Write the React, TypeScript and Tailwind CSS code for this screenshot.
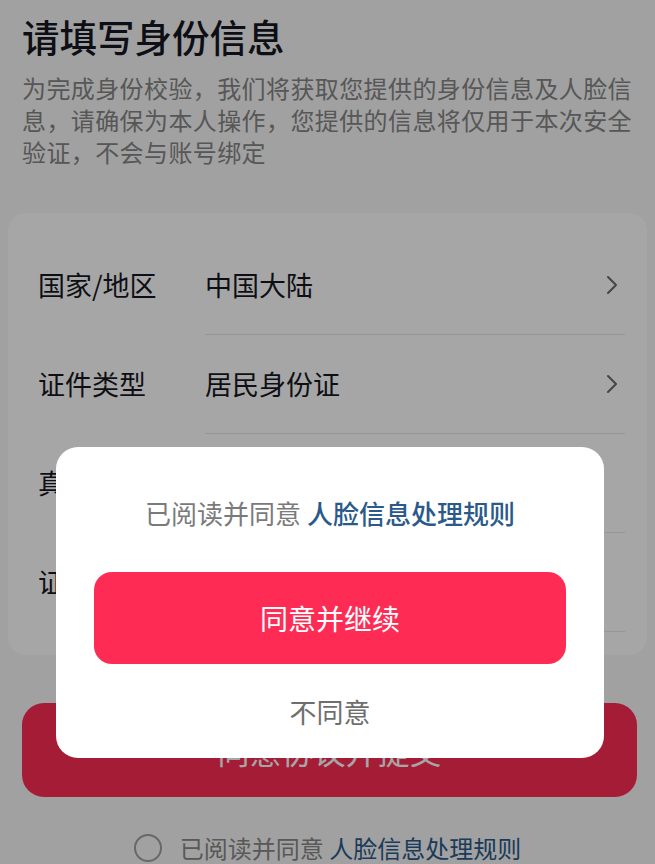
import React from "react";

const font = { fontFamily: '"Noto Sans CJK SC", "Noto Sans", sans-serif' };

function Chevron() {
  return (
    <svg width="14" height="22" viewBox="0 0 14 22" fill="none">
      <path d="M3 3 L11 11 L3 19" stroke="#6b6b6b" strokeWidth="2" strokeLinecap="round" strokeLinejoin="round" />
    </svg>
  );
}

function Row({ label, value, placeholder, chevron }: { label: string; value?: string; placeholder?: string; chevron?: boolean }) {
  return (
    <div className="flex h-[99px]">
      <div className="w-[197px] pl-[30px] flex items-center text-[27px] text-[#161823]">{label}</div>
      <div className="flex-1 mr-[22px] border-b border-[#e6e6e6] flex items-center justify-between pr-[6px]">
        {value ? (
          <span className="text-[27px] text-[#161823]">{value}</span>
        ) : (
          <span className="text-[27px] text-[#bbbbbb]">{placeholder}</span>
        )}
        {chevron ? <Chevron /> : null}
      </div>
    </div>
  );
}

export default function App() {
  return (
    <div className="relative w-full h-[864px] bg-[#f8f8f8] overflow-hidden" style={font}>
      <div className="pl-[22px] pr-[14px] pt-[12px]">
        <h1 className="text-[37.5px] leading-[48px] font-medium text-[#161823]">请填写身份信息</h1>
        <p className="mt-[12px] text-[24px] leading-[32px] tracking-[0.4px] text-[#868686]">
          为完成身份校验，我们将获取您提供的身份信息及人脸信息，请确保为本人操作，您提供的信息将仅用于本次安全验证，不会与账号绑定
        </p>
      </div>

      <div className="mx-[8px] mt-[45px] bg-white rounded-[18px] pt-[23px] pb-[23px]">
        <Row label="国家/地区" value="中国大陆" chevron />
        <Row label="证件类型" value="居民身份证" chevron />
        <Row label="真实姓名" placeholder="请输入真实姓名" />
        <Row label="证件号码" placeholder="请输入证件号码" />
      </div>

      <div className="ml-[22px] mr-[18px] mt-[48px] h-[94px] rounded-[22px] bg-[#fe2c55] flex items-center justify-center text-white text-[32px]">
        同意协议并提交
      </div>

      <div className="mt-[35px] flex items-center justify-center gap-[18px] h-[32px]">
        <span className="w-[28px] h-[28px] rounded-full border-2 border-[#a0a0a0]"></span>
        <span className="text-[24px] leading-[32px] text-[#888888]">
          已阅读并同意 <span className="text-[#2b5a8a]">人脸信息处理规则</span>
        </span>
      </div>

      <div className="absolute inset-0 bg-black/35 flex justify-start items-start pt-[447px] pl-[56px]">
        <div className="w-[548px] h-[311px] bg-white rounded-[22px] flex flex-col items-center pt-[50px]">
          <div className="text-[26px] leading-[32px] text-[#7a7a7a]">
            已阅读并同意 <span className="text-[#2b5a8a] font-medium">人脸信息处理规则</span>
          </div>
          <div className="mt-[43px] w-[472px] h-[92px] rounded-[18px] bg-[#fe2c55] flex items-center justify-center text-white text-[28px]">
            同意并继续
          </div>
          <div className="mt-[32px] text-[27px] leading-[32px] text-[#6e6e6e]">不同意</div>
        </div>
      </div>
    </div>
  );
}
